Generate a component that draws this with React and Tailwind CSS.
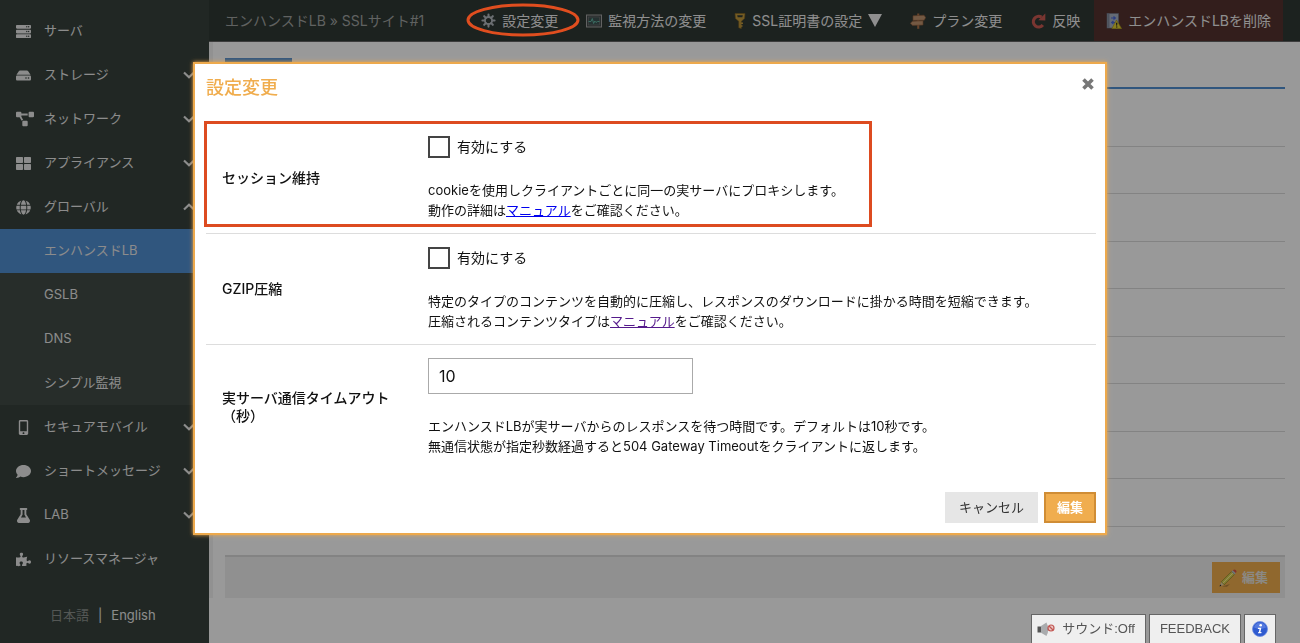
import { useState } from 'react';
import { FaServer, FaHdd, FaProjectDiagram, FaThLarge, FaGlobe, FaMobileAlt, FaComment, FaFlask, FaPuzzlePiece } from 'react-icons/fa';

const MENU = [
  { label: 'サーバ', icon: FaServer },
  { label: 'ストレージ', icon: FaHdd, arrow: 'down' },
  { label: 'ネットワーク', icon: FaProjectDiagram, arrow: 'down' },
  { label: 'アプライアンス', icon: FaThLarge, arrow: 'down' },
  { label: 'グローバル', icon: FaGlobe, arrow: 'up', children: ['エンハンスドLB', 'GSLB', 'DNS', 'シンプル監視'] },
  { label: 'セキュアモバイル', icon: FaMobileAlt, arrow: 'down' },
  { label: 'ショートメッセージ', icon: FaComment, arrow: 'down' },
  { label: 'LAB', icon: FaFlask, arrow: 'down' },
  { label: 'リソースマネージャ', icon: FaPuzzlePiece },
];

const ROWS = [1, 2, 3, 4, 5, 6, 7, 8, 9];

function Arrow({ dir }) {
  return (
    <svg viewBox="0 0 12 8" className={'ml-auto h-2 w-3 ' + (dir === 'up' ? 'rotate-180' : '')} fill="none" stroke="currentColor" strokeWidth="2.2">
      <path d="M1 1.5L6 6.2L11 1.5" />
    </svg>
  );
}

function GearIcon() {
  return (
    <svg viewBox="0 0 16 16" className="size-[15px]" fill="none" stroke="#b4b9be">
      <path strokeWidth="2.200" strokeLinecap="round" d="M8 1.500V4M8 12V14.500M1.500 8H4M12 8H14.500M3.400 3.400L5.200 5.200M10.800 10.800L12.600 12.600M3.400 12.600L5.200 10.800M10.800 5.200L12.600 3.400" />
      <circle cx="8" cy="8" r="3.800" strokeWidth="2" />
    </svg>
  );
}

function MonitorIcon() {
  return (
    <svg viewBox="0 0 16 14" className="h-3.5 w-4">
      <rect x="0.5" y="1" width="15" height="12" fill="#444b4b" stroke="#a4a4a4" />
      <rect x="2.5" y="3" width="11" height="8" fill="#3f5252" stroke="#777" strokeWidth="0.6" />
      <path d="M2.500 7.500H5L6.300 4.500L7.600 9.500L8.800 7L10 8.500L11.500 7.500H13.500" fill="none" stroke="#63b5a2" strokeWidth="1" />
    </svg>
  );
}

function KeyIcon() {
  return (
    <svg viewBox="0 0 12 16" className="h-4 w-3">
      <path d="M1 0.500H11L10.500 5.500L7.300 8.300V15.500L4.800 14.800V8.300L1.500 5.500Z" fill="#c29a3c" stroke="#8a6820" strokeWidth="0.6" />
      <path d="M3.200 2.200H8.800L8.300 4.300H3.700Z" fill="#303935" />
      <path d="M7 9.500H9V11H7ZM7 12.300H8.500V13.800H7Z" fill="#c29a3c" />
    </svg>
  );
}

function SignIcon() {
  return (
    <svg viewBox="0 0 16 16" className="size-4">
      <path d="M7.200 0.500H9.300V15.800H7.200Z" fill="#a9714a" />
      <path d="M3 2.800L14 2.200L15.700 4.600L14.200 7.200L3 7.400Z" fill="#c09470" stroke="#8f5a36" strokeWidth="0.6" />
      <path d="M2.500 8.200L13 7.800V12L2.500 12.400L0.400 10.200Z" fill="#c09470" stroke="#8f5a36" strokeWidth="0.6" />
    </svg>
  );
}

function ReloadIcon() {
  return (
    <svg viewBox="0 0 16 16" className="size-4">
      <path d="M12.800 12A5.300 5.300 0 1 1 11.500 4.200" fill="none" stroke="#cc5a52" strokeWidth="3.200" />
      <path d="M8.300 7.300L15.300 7.500V0.500Z" fill="#cc5a52" />
    </svg>
  );
}

function ServerWarnIcon() {
  return (
    <svg viewBox="0 0 16 16" className="size-4">
      <rect x="1" y="0.500" width="11.500" height="14.500" fill="#a9b2c4" stroke="#6e7687" strokeWidth="0.6" />
      <path d="M1.300 0.800H3.500V14.700H1.300Z" fill="#7f8899" />
      <path d="M5 5H9M7.500 3.500L9.300 5L7.500 6.500M10 9.500H6M7.500 8L5.700 9.500L7.500 11" fill="none" stroke="#4767dd" strokeWidth="1.200" />
      <path d="M10.500 7L15.700 15.700H5.800Z" fill="#e3d033" stroke="#a38f15" strokeWidth="0.6" />
      <path d="M10 9.700H11.400L11.100 12.700H10.300ZM10 13.400H11.400V14.600H10Z" fill="#222" />
    </svg>
  );
}

function PencilIcon() {
  return (
    <svg viewBox="0 0 20 20" className="size-5">
      <path d="M4 18.500L12 16L9 18.800Z" fill="#000" opacity="0.250" />
      <path d="M1.500 18.500L3.300 13.800L6.200 16.700Z" fill="#e5cfa0" />
      <path d="M1.500 18.500L2.200 16.600L3.400 17.800Z" fill="#222" />
      <path d="M3.300 13.800L13.500 3.600L16.400 6.500L6.200 16.700Z" fill="#dcd34f" stroke="#77702b" strokeWidth="0.600" />
      <path d="M4.800 15.200L15 5" stroke="#f4f09a" strokeWidth="1" />
      <path d="M13.500 3.600L14.900 2.200L17.800 5.100L16.400 6.500Z" fill="#b9c0c4" />
      <path d="M14.900 2.200Q16.500 0.800 18 2.200Q19.300 3.600 17.800 5.100Z" fill="#d9534a" />
    </svg>
  );
}

function SoundOffIcon() {
  return (
    <svg viewBox="0 0 18 16" className="h-4 w-4.5">
      <path d="M0.500 5.500H4V11.500H0.500Z" fill="#555" />
      <path d="M4 5L9.500 1.500V15L4 11.800Z" fill="#a9abad" />
      <path d="M9.500 1.500Q12.300 8 9.500 15Z" fill="#8a8c8f" />
      <circle cx="14" cy="7" r="3" fill="#eac6c4" stroke="#c25753" strokeWidth="1.200" />
      <path d="M12 5L16 9" stroke="#c25753" strokeWidth="1.200" />
    </svg>
  );
}

function InfoIcon() {
  return (
    <svg viewBox="0 0 16 16" className="size-4">
      <circle cx="8" cy="8" r="7.500" fill="#2f5bd0" stroke="#6d8be0" strokeWidth="0.800" />
      <path d="M2 6.500A6.200 6.200 0 0 1 14 6.500Q8 9 2 6.500Z" fill="#6f90ea" opacity="0.600" />
      <circle cx="8.700" cy="4.300" r="1.300" fill="#fff" />
      <path d="M6 6.700H9.300L8.400 11H9.600L9.300 12.200H6L6.300 11H6.900L7.500 7.900H5.800Z" fill="#fff" />
    </svg>
  );
}

function Sidebar() {
  return (
    <aside className="w-[209px] shrink-0 bg-[#37413c] pt-[9px] text-[13px] text-[#e9e9e9]">
      <ul>
        {MENU.map(({ label, icon: Icon, arrow, children }) => (
          <li key={label}>
            <a href="#" className="flex h-11 items-center pr-[14px] pl-4">
              <span className="w-7 shrink-0"><Icon className={label === 'ネットワーク' ? 'size-[18px]' : 'size-[15px]'} /></span>
              {label}
              {arrow && <Arrow dir={arrow} />}
            </a>
            {children && (
              <ul className="bg-[#414b46]">
                {children.map((c, i) => (
                  <li key={c}>
                    <a href="#" className={'flex h-11 items-center pl-11 ' + (i === 0 ? 'bg-[#508fd3]' : '')}>{c}</a>
                  </li>
                ))}
              </ul>
            )}
          </li>
        ))}
      </ul>
      <div className="flex items-center gap-[9px] pt-6 pb-4 pl-[50px] leading-5">
        <span className="text-[#8c918e]">日本語</span>
        <span>|</span>
        <a href="#">English</a>
      </div>
    </aside>
  );
}

function ToolButton({ icon, children, circled }) {
  return (
    <button type="button" className="relative flex items-center gap-[6px] px-[14px] whitespace-nowrap">
      {icon}
      {children}
      {circled && (
        <svg viewBox="0 0 114 34" className="absolute -inset-x-px top-[3px] z-20 h-[34px] w-[114px] overflow-visible" fill="none">
          <ellipse cx="57" cy="17" rx="55" ry="15" stroke="#e04e1f" strokeWidth="3" />
        </svg>
      )}
    </button>
  );
}

function TopBar() {
  return (
    <header className="flex h-[42px] border-b border-[#666] bg-[#303935] pr-[17px] pl-4 text-sm text-[#eee]">
      <div className="flex items-center whitespace-nowrap text-[#a0a4a2]">エンハンスドLB » SSLサイト#1</div>
      <div className="ml-auto flex">
        <ToolButton icon={<GearIcon />} circled>設定変更</ToolButton>
        <ToolButton icon={<MonitorIcon />}>監視方法の変更</ToolButton>
        <ToolButton icon={<KeyIcon />}>
          SSL証明書の設定
          <svg viewBox="0 0 14 13" className="h-[13px] w-[14px]" fill="currentColor"><path d="M0 0H14L7 13Z" /></svg>
        </ToolButton>
        <ToolButton icon={<SignIcon />}>プラン変更</ToolButton>
        <ToolButton icon={<ReloadIcon />}>反映</ToolButton>
        <button type="button" className="flex items-center gap-[6px] bg-[#55322f] px-3 whitespace-nowrap">
          <ServerWarnIcon />
          エンハンスドLBを削除
        </button>
      </div>
    </header>
  );
}

function CheckField({ id, children }) {
  const [on, setOn] = useState(false);
  return (
    <>
      <label htmlFor={id} className="flex h-[22px] items-center gap-[7px] text-sm">
        <input id={id} type="checkbox" checked={on} onChange={(e) => setOn(e.target.checked)} className="size-[22px] appearance-none border-2 border-[#444] bg-white checked:bg-[#444]" />
        有効にする
      </label>
      <p className="mt-[22px] leading-5">{children}</p>
    </>
  );
}

function SettingsDialog() {
  const [timeout, setTimeoutSec] = useState('10');
  return (
    <div role="dialog" aria-labelledby="dialog-title" className="w-full max-w-[914px] border-2 border-[#eda94c] bg-white pt-[10px] pr-[9px] pb-[10px] pl-[11px] text-[13px] text-[#111] shadow-[0_0_4px_#eda94c]">
      <div className="mb-[21px] flex items-center justify-between">
        <h2 id="dialog-title" className="text-lg leading-7 font-medium text-[#f0ad4e]">設定変更</h2>
        <button type="button" aria-label="閉じる" className="-mt-2 mr-[2px]">
          <svg viewBox="0 0 12 12" className="size-3" stroke="#777" strokeWidth="3.600"><path d="M1.500 1.500L10.500 10.500M10.500 1.500L1.500 10.500" /></svg>
        </button>
      </div>

      <div className="relative">
        <table className="w-full">
          <tbody>
            <tr className="border-b border-[#ddd]">
              <th className="w-[222px] pl-4 text-left align-middle text-sm leading-[18px] font-medium">セッション維持</th>
              <td className="pt-[13px] pb-[13px]">
                <CheckField id="session">
                  cookieを使用しクライアントごとに同一の実サーバにプロキシします。<br />
                  動作の詳細は<a href="#" className="text-[#0000ee] underline">マニュアル</a>をご確認ください。
                </CheckField>
              </td>
            </tr>
            <tr className="border-b border-[#ddd]">
              <th className="pl-4 text-left align-middle text-sm leading-[18px] font-medium">GZIP圧縮</th>
              <td className="pt-[13px] pb-[13px]">
                <CheckField id="gzip">
                  特定のタイプのコンテンツを自動的に圧縮し、レスポンスのダウンロードに掛かる時間を短縮できます。<br />
                  圧縮されるコンテンツタイプは<a href="#" className="text-[#551a8b] underline">マニュアル</a>をご確認ください。
                </CheckField>
              </td>
            </tr>
            <tr>
              <th className="pr-4 pl-4 text-left align-middle text-sm leading-[18px] font-medium"><label htmlFor="timeout">実サーバ通信タイムアウト（秒）</label></th>
              <td className="pt-[13px] pb-[13px]">
                <input id="timeout" type="text" value={timeout} onChange={(e) => setTimeoutSec(e.target.value)} className="block h-9 w-[265px] border border-[#aaa] px-[10px] text-base outline-none" />
                <p className="mt-[22px] leading-5">
                  エンハンスドLBが実サーバからのレスポンスを待つ時間です。デフォルトは10秒です。<br />
                  無通信状態が指定秒数経過すると504 Gateway Timeoutをクライアントに返します。
                </p>
              </td>
            </tr>
          </tbody>
        </table>
        <div className="pointer-events-none absolute -top-[2px] -left-[2px] h-[106px] w-3/4 border-3 border-[#dd4b20]" />
      </div>

      <div className="mt-[23px] flex justify-end gap-[6px]">
        <button type="button" className="h-[31px] bg-[#e6e6e6] px-[14px] text-[#333]">キャンセル</button>
        <button type="button" className="h-[31px] border-2 border-[#d08d35] bg-[#f0ad4e] px-[11px] font-bold text-white">編集</button>
      </div>
    </div>
  );
}

export default function App() {
  return (
    <div className="flex min-h-screen bg-white font-['Inter','Noto_Sans_CJK_JP',sans-serif]">
      <Sidebar />
      <main className="min-w-0 flex-1">
        <TopBar />
        <div className="border-l-4 border-[#f2f2f2] pt-4 pr-[15px] pl-3">
          <div className="h-[29px] w-[67px] border-t-4 border-[#508fd3]" />
          <div className="border-t-2 border-[#508fd3] pt-[11px]">
            {ROWS.map((n) => (
              <div key={n} className="h-[47px] border-b border-[#dadada] odd:not-first:h-12" />
            ))}
          </div>
          <div className="mt-7 flex h-[43px] items-center justify-end border-t-2 border-[#dadada] bg-[#f0f0f0] pr-[5px]">
            <button type="button" className="flex h-[31px] items-center gap-1 bg-[#f0ad4e] pr-3 pl-[6px] text-[13px] font-bold text-[#e8e4dc]">
              <PencilIcon />
              編集
            </button>
          </div>
        </div>
      </main>

      <div className="fixed inset-0 z-10 flex items-start justify-center overflow-auto bg-black/40 pt-[62px]">
        <SettingsDialog />
      </div>

      <div className="fixed right-6 bottom-0 z-20 flex gap-[3px] font-['Liberation_Sans','Noto_Sans_CJK_JP',sans-serif] text-[13px] text-[#555]">
        <button type="button" className="flex h-[29px] items-center gap-[7px] border border-b-0 border-[#666] bg-[#efefef] pr-[10px] pl-[5px]">
          <SoundOffIcon />
          サウンド:Off
        </button>
        <button type="button" className="h-[29px] border border-b-0 border-[#666] bg-[#efefef] px-[10px]">FEEDBACK</button>
        <button type="button" aria-label="情報" className="flex h-[29px] items-center border border-b-0 border-[#666] bg-[#efefef] px-[7px]">
          <InfoIcon />
        </button>
      </div>
    </div>
  );
}
